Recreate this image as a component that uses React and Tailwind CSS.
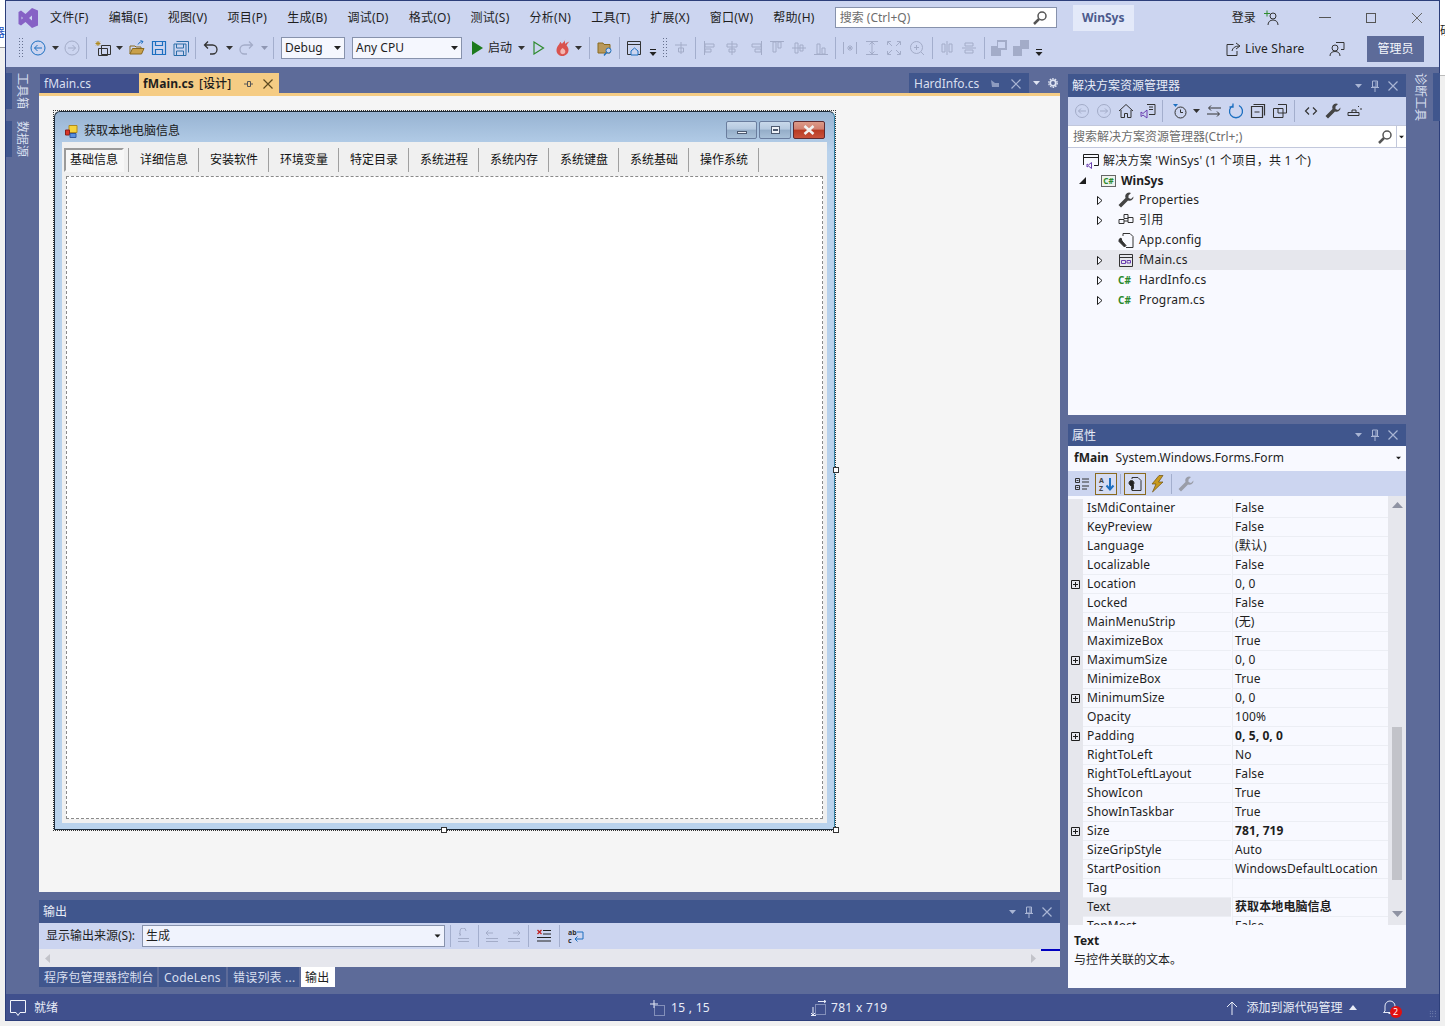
import React from 'react';

const Ico = ({ children, w = 16, h = 16, className = '' }) => (
    <svg width={w} height={h} viewBox={`0 0 ${w} ${h}`} fill="none" stroke="currentColor" strokeWidth="1" className={`shrink-0 ${className}`}>
        {children}
    </svg>
);

const Caret = ({ className = '' }) => (
    <svg width="7" height="4" viewBox="0 0 7 4" className={`shrink-0 ${className}`}><path d="M0 0h7L3.5 4z" fill="currentColor" /></svg>
);
const Sep = ({ className = '' }) => <div className={`w-px h-[22px] bg-[#a3aecd] shrink-0 ${className}`} />;
const Grip = ({ className = '' }) => (
    <div className={`w-[6px] h-[22px] shrink-0 bg-[radial-gradient(#66718f_0.6px,transparent_0.8px)] bg-[length:3px_3px] ${className}`} />
);
const ChevBar = ({ className = '' }) => (
    <svg width="8" height="8" viewBox="0 0 8 8" className={`shrink-0 ${className}`}><path d="M1 1h6v1H1z M0.5 4h7L4 8z" fill="#222" /></svg>
);

const Pin = () => <svg width="10" height="12" viewBox="0 0 10 12" className="shrink-0"><path d="M2.5 1h5v6h-5z M1 7.5h8 M5 8v4 M6 1.5v5" fill="none" stroke="currentColor" /></svg>;
const Cross = () => <svg width="10" height="10" viewBox="0 0 10 10" className="shrink-0"><path d="M0.5 0.5l9 9M9.5 0.5l-9 9" stroke="currentColor" strokeWidth="1.2" /></svg>;

const ToolTitle = ({ label, h = 'h-[23px]' }) => (
    <div className={`${h} pr-[8px] bg-[#40568d] flex items-center pl-[4px] text-[12px] text-[#e8ecf7]`}>
        <span className="pt-px">{label}</span>
        <div className="ml-auto flex items-center gap-[8px] text-[#a9b5d4]">
            <Caret />
            <Pin />
            <Cross />
        </div>
    </div>
);

const menus = ['文件(F)', '编辑(E)', '视图(V)', '项目(P)', '生成(B)', '调试(D)', '格式(O)', '测试(S)', '分析(N)', '工具(T)', '扩展(X)', '窗口(W)', '帮助(H)'];
const formTabs = ['详细信息', '安装软件', '环境变量', '特定目录', '系统进程', '系统内存', '系统键盘', '系统基础', '操作系统'];

const props = [
    ['IsMdiContainer', 'False'], ['KeyPreview', 'False'], ['Language', '(默认)'], ['Localizable', 'False'],
    ['Location', '0, 0', 'plus'], ['Locked', 'False'], ['MainMenuStrip', '(无)'], ['MaximizeBox', 'True'],
    ['MaximumSize', '0, 0', 'plus'], ['MinimizeBox', 'True'], ['MinimumSize', '0, 0', 'plus'], ['Opacity', '100%'],
    ['Padding', '0, 5, 0, 0', 'plus', 'bold'], ['RightToLeft', 'No'], ['RightToLeftLayout', 'False'], ['ShowIcon', 'True'],
    ['ShowInTaskbar', 'True'], ['Size', '781, 719', 'plus', 'bold'], ['SizeGripStyle', 'Auto'],
    ['StartPosition', 'WindowsDefaultLocation'], ['Tag', ''], ['Text', '获取本地电脑信息', '', 'bold', 'sel'], ['TopMost', 'False'],
];

const PlusBox = () => (
    <svg width="9" height="9" viewBox="0 0 9 9" className="shrink-0"><path d="M0.5 0.5h8v8h-8z M2 4.5h5 M4.5 2v5" fill="none" stroke="#1e1e1e" /></svg>
);

const TreeArrow = () => (
    <svg width="6" height="9" viewBox="0 0 6 9" className="shrink-0"><path d="M0.5 0.5L5 4.5L0.5 8.5z" fill="#f8f9ff" stroke="#1e1e1e" /></svg>
);

const CSharp = () => <span className="w-[16px] shrink-0 text-[10px] font-bold text-[#2d8a2d] leading-none">C#</span>;

const TreeRow = ({ arrow, icon, label, sel }) => (
    <div className={`h-[20px] flex items-center pl-[29px] ${sel ? 'bg-[#e6e7ed]' : ''}`}>
        <div className="w-[6px] flex items-center shrink-0">{arrow && <TreeArrow />}</div>
        <div className="w-[16px] ml-[15px] shrink-0 flex items-center justify-center">{icon}</div>
        <span className="ml-[5px] tracking-[0.2px]">{label}</span>
    </div>
);

const Gray = ({ children, className = '' }) => <Ico className={`text-[#a3acc8] ${className}`}>{children}</Ico>;

const Wrench = ({ fill = '#444', className = '' }) => (
    <svg width="16" height="16" viewBox="0 0 16 16" className={`shrink-0 ${className}`}><path d="M11 0.500a4 4 0 0 0-3.500 5.500L0.500 13l2.500 2.500 7-7A4 4 0 0 0 15.500 4.500L13 7l-2.500-1V3.500L13 1a4 4 0 0 0-2-.5z" fill={fill} /></svg>
);

const MainToolbar = () => (
    <div className="h-[33px] pb-[6px] flex items-center text-[#1e1e1e] text-[12px]">
        <Grip className="ml-[12px]" />
        <Ico className="ml-[6px] text-[#1c6fc0]"><circle cx="8" cy="8" r="7" /><path d="M12 8H4.5M7.5 5L4.5 8l3 3" /></Ico>
        <Caret className="ml-[6px] text-[#333]" />
        <Gray className="ml-[5px]"><circle cx="8" cy="8" r="7" /><path d="M4 8h7.5M8.5 5l3 3-3 3" /></Gray>
        <Sep className="ml-[6px]" />
        <Ico className="ml-[8px] text-[#333]"><path d="M6.5 5.5h9v9h-9z M3.5 8.5h9v7h-9z" /><path d="M3 1v5M0.5 3.5h5M1.2 1.7l3.6 3.6M4.8 1.7L1.2 5.3" stroke="#b08a1e" /></Ico>
        <Caret className="ml-[5px] text-[#333]" />
        <Ico className="ml-[6px]"><path d="M1 14V6h5l1 1h5v2" stroke="#8a6a1e" /><path d="M1 14l2.5-5.5H15L12.5 14z" fill="#c9a04a" stroke="#8a6a1e" /><path d="M9 4.5c1-2 3-3 4.5-3M11.5 0.5l2.5 1-1.5 2.2" stroke="#1c6fc0" /></Ico>
        <Ico className="ml-[6px] text-[#1c6fc0]"><path d="M1.5 1.5h13v13h-13z M4.5 1.5v4h7v-4 M4.5 14.5v-5h7v5" strokeWidth="1.2" /></Ico>
        <Ico className="ml-[6px] text-[#2c6ea8]"><path d="M3.5 1.5h12v11 M1 4h12v11.5H1z M3.5 4v4h7V4 M3.5 15v-4h7v4" /></Ico>
        <Sep className="ml-[6px]" />
        <Ico className="ml-[7px] text-[#333]"><path d="M5 1.5L1.5 5 5 8.5M1.5 5h8a4.5 4.5 0 0 1 0 9H7" strokeWidth="1.3" /></Ico>
        <Caret className="ml-[7px] text-[#333]" />
        <Gray className="ml-[5px]"><path d="M11 1.5L14.5 5 11 8.5M14.5 5h-8a4.5 4.5 0 0 0 0 9H9" strokeWidth="1.3" /></Gray>
        <Caret className="ml-[7px] text-[#8f97b3]" />
        <Sep className="ml-[5px]" />
        <div className="ml-[7px] w-[64px] h-[22px] shrink-0 bg-[#f5f7fe] border border-[#8792ac] flex items-center pl-[3px] pr-[3px]">
            <span>Debug</span><Caret className="ml-auto text-[#222]" />
        </div>
        <div className="ml-[7px] w-[110px] h-[22px] shrink-0 bg-[#f5f7fe] border border-[#8792ac] flex items-center pl-[3px] pr-[3px]">
            <span>Any CPU</span><Caret className="ml-auto text-[#222]" />
        </div>
        <svg width="11" height="14" viewBox="0 0 11 14" className="ml-[10px] shrink-0"><path d="M0 0l11 7-11 7z" fill="#1c7a1c" /></svg>
        <span className="ml-[5px] w-[25px] shrink-0">启动</span>
        <Caret className="ml-[5px] text-[#333]" />
        <svg width="12" height="14" viewBox="0 0 12 14" className="ml-[8px] shrink-0"><path d="M1 1l9.5 6L1 13z" fill="none" stroke="#2e8b2e" strokeWidth="1.2" /></svg>
        <svg width="16" height="18" viewBox="0 0 16 18" className="ml-[10px] shrink-0"><path d="M10 0c.5 2.5-2 3-3 5C6 3.5 5.5 3 5 3c.3 2-3.5 4-3.5 8.5C1.500 15 4.500 17 7.500 17s6-2.500 6-6c0-2-1-3.500-2-4.500.5-1.500 2-3 3-4-2 .5-3 1-4.500 2.500z" fill="#d9534f" /><path d="M7.500 9c-2 1.500-2.500 3-2 5 .5 1.500 3.500 1.500 4.500 0 .8-1.500.3-3.500-2.500-5z" fill="#f4b6b0" /></svg>
        <Caret className="ml-[4px] text-[#333]" />
        <Sep className="ml-[7px]" />
        <Ico className="ml-[7px]"><path d="M1 13V3h5l1 1.500h6V13z" fill="#b9985a" stroke="#8a6a1e" /><circle cx="11.500" cy="10.500" r="2.500" fill="#ccd5f0" stroke="#1c6fc0" /><path d="M9.500 12.500L7 15.500" stroke="#1c6fc0" strokeWidth="1.300" /></Ico>
        <Sep className="ml-[6px]" />
        <Ico className="ml-[6px] text-[#333]"><path d="M1.500 1.500h13v13h-13z M1.500 4.500h13" /><path d="M5 11l3.500-3 3.500 3v4H5z" fill="#ccd5f0" stroke="#1c6fc0" /></Ico>
        <ChevBar className="ml-[7px] mt-[8px]" />
        <Grip className="ml-[5px]" />
        <Gray className="ml-[5px]"><path d="M8 2v12M2 5h12M5.500 8h5v4h-5z" /></Gray>
        <Sep className="ml-[6px]" />
        <Gray className="ml-[7px]"><path d="M1.500 1v14M2 4h9v3H2zM2 9h6v3H2z" /></Gray>
        <Gray className="ml-[5px]"><path d="M8 1v14M3 4h10v3H3zM5 9h6v3H5z" /></Gray>
        <Gray className="ml-[7px]"><path d="M14.500 1v14M5 4h9v3H5zM8 9h6v3H8z" /></Gray>
        <Gray className="ml-[6px]"><path d="M1 1.500h14M4 2v10h3V2zM9 2v6h3V2z" /></Gray>
        <Gray className="ml-[6px]"><path d="M1 8h14M4 3v10h3V3zM9 5v6h3V5z" /></Gray>
        <Gray className="ml-[6px]"><path d="M1 14.500h14M4 4v10h3V4zM9 8v6h3V8z" /></Gray>
        <Sep className="ml-[6px]" />
        <Gray className="ml-[6px]"><path d="M1.500 2v12M14.500 2v12M5 8h6M8 5v6M6 6l4 4M10 6l-4 4" /></Gray>
        <Gray className="ml-[6px]"><path d="M2 1.500h12M2 14.500h12M8 2v12M5.500 4.500L8 2l2.500 2.500M5.500 11.500L8 14l2.500-2.500" /></Gray>
        <Gray className="ml-[6px]"><path d="M1.500 5V1.500H5M11 1.500h3.500V5M14.500 11v3.500H11M5 14.500H1.500V11M2 2l4 4M14 2l-4 4M14 14l-4-4M2 14l4-4" /></Gray>
        <Gray className="ml-[7px]"><circle cx="7.500" cy="7.500" r="6" /><path d="M12 12l3 3M5 7.500h5M7.500 5v5" /></Gray>
        <Sep className="ml-[7px]" />
        <Gray className="ml-[6px]"><path d="M8 1v14M3 4h3v8H3zM10 4h3v8h-3z" /></Gray>
        <Gray className="ml-[6px]"><path d="M1 8h14M4 3h8v3H4zM4 10h8v3H4z" /></Gray>
        <Sep className="ml-[7px]" />
        <svg width="16" height="16" viewBox="0 0 16 16" className="ml-[6px] shrink-0"><path d="M0 6h10v10H0z" fill="#a3acc8" /><path d="M6 0h10v10H6z" fill="#a3acc8" /><path d="M7 2h7v6H7z" fill="#ccd5f0" /></svg>
        <svg width="16" height="16" viewBox="0 0 16 16" className="ml-[6px] shrink-0"><path d="M0 6h9v10H0z" fill="#a3acc8" /><path d="M7 0h9v9H7z" fill="#a3acc8" /></svg>
        <ChevBar className="ml-[6px] mt-[8px]" />
        <div className="ml-auto flex items-center pr-[15px] mt-[2px]">
            <Ico className="text-[#333]"><path d="M8.500 3.500H2v11h10V10M7 10c.5-3 3-5 7-5M11 2l4 3-4 3" /></Ico>
            <span className="ml-[4px] w-[60px] tracking-[0.2px]">Live Share</span>
            <Ico className="ml-[24px] text-[#333]"><circle cx="6" cy="7" r="3" /><path d="M1 15c0-3 2-4.500 5-4.500s5 1.500 5 4.500M7 1.500h8v7h-3" /></Ico>
            <div className="ml-[22px] w-[57px] h-[26px] bg-[#5d6b99] text-[#f4f6fc] flex items-center justify-center">管理员</div>
        </div>
    </div>
);

const SolutionExplorer = () => (
    <div className="h-[341px] flex flex-col shrink-0">
        <ToolTitle label="解决方案资源管理器" />
        <div className="h-[28px] bg-[#ccd5f0] flex items-center text-[#333] shrink-0">
            <Gray className="ml-[6px]"><circle cx="8" cy="8" r="6.500" /><path d="M12 8H4.500M7 5.500L4.500 8 7 10.500" /></Gray>
            <Gray className="ml-[6px]"><circle cx="8" cy="8" r="6.500" /><path d="M4 8h7.500M9 5.500L11.500 8 9 10.500" /></Gray>
            <Ico className="ml-[6px]"><path d="M1 8l7-6.500L15 8M3 7v7.500h3.500v-4h3v4H13V7" /></Ico>
            <Ico className="ml-[6px]"><path d="M7 1.500h8v10H9M9 4h4M9 6.500h4" /><path d="M1 9l2 1.500 4-3.500v8L3 12l-2 1.500z" stroke="#6a3fb0" /></Ico>
            <Sep className="ml-[6px]" />
            <Ico className="ml-[9px]"><circle cx="8.500" cy="9.500" r="5.500" /><path d="M8.500 6.500v3h2.500" /><path d="M1 1h5L3.500 4z" fill="#1c6fc0" stroke="none" /></Ico>
            <Caret className="ml-[5px]" />
            <Ico className="ml-[6px]"><path d="M15 5H3M5 2.500L2.500 5 5 7.500M1 11h12M11 8.500l2.500 2.500L11 13.500" /></Ico>
            <Ico className="ml-[6px] text-[#1c6fc0]"><path d="M5 2.500A6.500 6.500 0 1 0 11 2.500M5 0.500v3.500H1.500" strokeWidth="1.300" /></Ico>
            <Ico className="ml-[6px]"><path d="M3.500 1.500h11v11M1.500 3.500h11v11h-11zM4.500 9h5" strokeWidth="1.200" /></Ico>
            <Ico className="ml-[6px]"><path d="M6 1.500h8.500V10H11M1.500 5.500H11V14.500H1.500zM6 5.500V10h5" /></Ico>
            <Sep className="ml-[6px]" />
            <Ico className="ml-[8px]"><path d="M6 4.500L2.500 8 6 11.500M10 4.500L13.500 8 10 11.500" strokeWidth="1.200" /></Ico>
            <Wrench className="ml-[6px]" />
            <Ico className="ml-[6px]"><path d="M1 9.500h11v3H1zM5 9.500V7h4v2.500M11 4l1-1M13 6h2" /></Ico>
        </div>
        <div className="h-[23px] bg-white border-y border-[#c2c8dc] flex items-center pl-[5px] text-[12px] text-[#6d6d6d] shrink-0">
            <span>搜索解决方案资源管理器(Ctrl+;)</span>
            <Ico className="ml-auto text-[#555]"><circle cx="10" cy="6" r="4" strokeWidth="1.500" /><path d="M7 9l-5 5" strokeWidth="2.500" /></Ico>
            <div className="ml-[3px] w-[10px] h-full border-l border-[#c2c8dc] flex items-center justify-center"><Caret className="text-[#222] scale-75" /></div>
        </div>
        <div className="flex-1 bg-[#f8f9ff] pt-[2px] text-[12px] text-[#1e1e1e]">
            <div className="h-[20px] flex items-center pl-[15px] pt-px">
                <Ico><path d="M0.500 1.500h15v11H11M0.500 12V1.500M0.500 4.500h15" /><path d="M4 11l1.500 1 3-2.500v6l-3-2.500-1.500 1z" stroke="#6a3fb0" /></Ico>
                <span className="ml-[4px] tracking-[0.22px]">解决方案 'WinSys' (1 个项目，共 1 个)</span>
            </div>
            <div className="h-[20px] flex items-center pl-[11px] pt-px">
                <svg width="7" height="7" viewBox="0 0 7 7" className="shrink-0"><path d="M7 0v7H0z" fill="#1e1e1e" /></svg>
                <div className="ml-[15px] w-[15px] h-[12px] border border-[#666] bg-[#eef3ee] text-[8px] leading-[10px] text-center font-bold text-[#2d8a2d] shrink-0">C#</div>
                <span className="ml-[5px] font-bold">WinSys</span>
            </div>
            <TreeRow arrow label="Properties" icon={<Wrench />} />
            <TreeRow arrow label="引用" icon={<Ico className="text-[#333]"><path d="M6 2.500h4v4H6zM1 7.500h5v4H1zM10 5.500h5v5h-5zM6 9h4" /></Ico>} />
            <TreeRow label="App.config" icon={<Ico className="text-[#333]"><path d="M5 4V1.500h7l3 3v11H8" /><path d="M3 6a3 3 0 0 0-2 3.500L6.500 15 8 13.500 4 9z" fill="#333" /></Ico>} />
            <TreeRow arrow sel label="fMain.cs" icon={<Ico className="text-[#333]"><path d="M1.500 2.500h13v12h-13zM1.500 5.500h13" /><path d="M3.500 8.500h4v3h-4zM9 8.500h3.500v2.500H9z" stroke="#6a3fb0" /></Ico>} />
            <TreeRow arrow label="HardInfo.cs" icon={<CSharp />} />
            <TreeRow arrow label="Program.cs" icon={<CSharp />} />
        </div>
    </div>
);

const PropertiesPanel = () => (
    <div className="mt-[9px] h-[564px] flex flex-col shrink-0">
        <ToolTitle label="属性" h="h-[22px]" />
        <div className="h-[25px] bg-[#f8f9ff] flex items-center pl-[6px] pr-[4px] pb-[2px] text-[12px] text-[#1e1e1e] shrink-0">
            <span className="font-bold">fMain</span>
            <span className="ml-[7px] tracking-[0.1px]">System.Windows.Forms.Form</span>
            <Caret className="ml-auto scale-75" />
        </div>
        <div className="h-[25px] bg-[#ccd5f0] flex items-center text-[#333] shrink-0">
            <Ico className="ml-[6px]"><path d="M1.500 2.500h4v4h-4zM1.500 9.500h4v4h-4zM8 3h7M8 6h7M8 10h7M8 13h5M2.500 4.500h2M2.500 11.500h2" /></Ico>
            <div className="ml-[5px] w-[22px] h-[22px] border border-[#8a6a1e] bg-[#d5dcf2] flex items-center justify-center">
                <svg width="17" height="16" viewBox="0 0 17 16"><text x="1" y="7" fontSize="7" fontWeight="bold" fill="#444" fontFamily="Noto Sans">A</text><text x="1" y="15" fontSize="7" fontWeight="bold" fill="#444" fontFamily="Noto Sans">Z</text><path d="M12 2v11M8.500 9.500L12 13.500l3.500-4" stroke="#1c6fc0" strokeWidth="2" fill="none" /></svg>
            </div>
            <div className="ml-[3px] w-px h-[20px] bg-[#a3aecd]" />
            <div className="ml-[3px] w-[22px] h-[22px] border border-[#8a6a1e] bg-[#d5dcf2] flex items-center justify-center">
                <Ico><path d="M5 3V1.500h6l3 3v10H5v-3" /><path d="M4.500 4.500a2.500 2.500 0 0 0-2 4l2 2v3l2-1v-4a2.500 2.500 0 0 0-2-4z" fill="#222" /></Ico>
            </div>
            <svg width="16" height="18" viewBox="0 0 16 18" className="ml-[3px]"><path d="M10 0.500L3 9h4l-3.500 8L14 7H9.500L14 0.500z" fill="#c89a1e" stroke="#6e5210" strokeWidth="0.700" /></svg>
            <div className="ml-[6px] w-px h-[20px] bg-[#a3aecd]" />
            <Wrench fill="#9a9da8" className="ml-[6px]" />
        </div>
        <div className="h-[429px] bg-[#f8f9ff] flex overflow-hidden shrink-0 text-[12px] text-[#1e1e1e]">
            <div className="flex-1 pt-[3px] min-w-0">
                {props.map(([name, value, plus, bold, sel]) => (
                    <div key={name} className="h-[19px] flex items-stretch shrink-0">
                        <div className="w-[15px] bg-[#e6e7ed] flex items-center justify-center shrink-0 pr-[1px]">{plus && <PlusBox />}</div>
                        <div className={`w-[148px] pl-[4px] flex items-center border-b border-[#eceef4] shrink-0 tracking-[0.12px] ${sel ? 'bg-[#e6e7ed]' : ''}`}>{name}</div>
                        <div className={`flex-1 pl-[2px] ml-px flex items-center border-b border-[#eceef4] border-l border-l-[#eceef4] tracking-[0.1px] ${bold ? 'font-bold' : ''}`}>{value}</div>
                    </div>
                ))}
            </div>
            <div className="w-[18px] bg-[#e6e7ed] flex flex-col items-center shrink-0">
                <svg width="11" height="6" viewBox="0 0 11 6" className="mt-[6px] shrink-0"><path d="M5.500 0L11 6H0z" fill="#8f93a3" /></svg>
                <div className="mt-[219px] w-[10px] h-[153px] bg-[#c2c3c9]" />
                <svg width="11" height="6" viewBox="0 0 11 6" className="mt-[31px] shrink-0"><path d="M0 0h11L5.500 6z" fill="#8f93a3" /></svg>
            </div>
        </div>
        <div className="h-[63px] bg-[#f8f9ff] pl-[6px] pt-[6px] text-[12px] text-[#1e1e1e] shrink-0 leading-[19px]">
            <div className="font-bold">Text</div>
            <div>与控件关联的文本。</div>
        </div>
    </div>
);

const WinBtn = ({ w, red, children }) => (
    <div className={`${w} h-[18px] rounded-[2px] border flex items-center justify-center shrink-0 ${red ? 'border-[#5e2a30] bg-[linear-gradient(#dd9a88_0%,#d08070_45%,#b83a22_50%,#c9523c_100%)]' : 'border-[#6a7d9e] bg-[linear-gradient(#c8d8ea_0%,#b5c9e0_45%,#94adc8_50%,#a8c0d8_100%)]'}`}>
        {children}
    </div>
);

const DesignerForm = () => (
    <div className="relative w-[783px] h-[721px] mt-[14px] ml-[14px] border border-dotted border-[#333]">
        <div className="w-full h-full rounded-t-[6px] border border-[#1d2b3a] border-r-[#2d7fa3] bg-[linear-gradient(#97b3d2,#b9d2ec_40px,#b9d2ec)] flex flex-col px-[7px] pb-[6px]">
            <div className="h-[30px] pt-[8px] flex items-center shrink-0">
                <svg width="13" height="13" viewBox="0 0 13 13" className="ml-[3px] shrink-0"><path d="M4 0.500h8v7H4z" fill="#f5d33c" stroke="#b08a1e" /><path d="M0.500 5h4v5h-4z" fill="#d9352a" stroke="#8a2018" /><path d="M5 8.500h6v4H5z" fill="#5a8fe0" stroke="#305a9e" /></svg>
                <span className="ml-[6px] text-[12px] text-[#1a1a1a]">获取本地电脑信息</span>
                <div className="ml-auto mr-[2px] -mt-[3px] flex items-center gap-[2px]">
                    <WinBtn w="w-[31px]"><div className="w-[10px] h-[3px] mt-[5px] bg-[#eef2f8] border border-[#4d5a70]" /></WinBtn>
                    <WinBtn w="w-[32px]"><div className="w-[9px] h-[8px] bg-[#eef2f8] border border-[#4d5a70] flex items-center justify-center"><div className="w-[5px] h-[2px] bg-[#4d5a70]" /></div></WinBtn>
                    <WinBtn w="w-[32px]" red><svg width="12" height="10" viewBox="0 0 12 10"><path d="M1.500 1l9 8M10.500 1l-9 8" stroke="#f2f2f2" strokeWidth="2.600" /></svg></WinBtn>
                </div>
            </div>
            <div className="flex-1 bg-[#f0f0f0] flex flex-col px-[4px] pt-[6px] pb-[4px] text-[12px] text-[#111] min-h-0">
                <div className="h-[24px] flex items-stretch shrink-0 -ml-[2px]">
                    <div className="w-[65px] border-r border-[#a0a0a0] shrink-0 pr-[4px]">
                        <div className="h-full border-2 border-[#9a9a9a] border-r-[#f7f7f7] border-b-[#f7f7f7] bg-[#f7f7f7] flex items-center justify-center">基础信息</div>
                    </div>
                    {formTabs.map((t) => (
                        <div key={t} className="w-[70px] border-r border-[#a0a0a0] flex items-center pl-[11px] shrink-0">{t}</div>
                    ))}
                </div>
                <div className="mt-[4px] flex-1 border border-dashed border-[#8a8a8a] bg-white" />
            </div>
        </div>
        <div className="absolute left-[387px] -bottom-[3px] w-[6px] h-[6px] bg-white border border-[#333]" />
        <div className="absolute -right-[4px] top-[356px] w-[6px] h-[6px] bg-white border border-[#333]" />
        <div className="absolute -right-[4px] -bottom-[3px] w-[6px] h-[6px] bg-white border border-[#333]" />
    </div>
);

const OutputPanel = () => (
    <div className="mt-[8px] shrink-0">
        <ToolTitle label="输出" />
        <div className="h-[26px] bg-[#ccd5f0] flex items-center pl-[7px] text-[12px] text-[#1e1e1e] relative">
            <span className="w-[90px] shrink-0">显示输出来源(S):</span>
            <div className="ml-[6px] w-[303px] h-[22px] bg-[#f0f3fd] border border-[#8792ac] flex items-center px-[3px] shrink-0">
                <span>生成</span><Caret className="ml-auto scale-90" />
            </div>
            <Sep className="ml-[5px]" />
            <Gray className="ml-[5px]"><path d="M4 8V3a3 3 0 0 1 6 0M2 10.500h11M2 13.500h11M5 7L3 5" /></Gray>
            <Sep className="ml-[6px]" />
            <Gray className="ml-[5px]"><path d="M2 5h7M4.500 2.500L2 5l2.500 2.500M2 10.500h12M2 13.500h12" /></Gray>
            <Gray className="ml-[6px]"><path d="M14 5H7M11.500 2.500L14 5l-2.500 2.500M2 10.500h12M2 13.500h12" /></Gray>
            <Sep className="ml-[6px]" />
            <Ico className="ml-[7px] text-[#222]"><path d="M7 2.500h8M7 6h8M1 9.500h14M1 13h14" /><path d="M1.500 2l4 4M5.500 2l-4 4" stroke="#c02020" strokeWidth="1.300" /></Ico>
            <Sep className="ml-[7px]" />
            <svg width="16" height="16" viewBox="0 0 16 16" className="ml-[8px] shrink-0"><text x="0" y="7" fontSize="7" fontWeight="bold" fill="#333" fontFamily="Noto Sans">ab</text><text x="0" y="15" fontSize="7" fontWeight="bold" fill="#333" fontFamily="Noto Sans">c</text><path d="M9 4h6v7H7M9.500 8.500L7 11l2.500 2.500" fill="none" stroke="#1c6fc0" /></svg>
            <div className="absolute right-0 bottom-[-2px] w-[19px] h-[2px] bg-[#0000c0]" />
        </div>
        <div className="h-[18px] bg-[#e6e7ed] flex items-center justify-between pl-[6px] pr-[24px]">
            <svg width="5" height="9" viewBox="0 0 5 9"><path d="M5 0v9L0 4.500z" fill="#c2c3c9" /></svg>
            <svg width="5" height="9" viewBox="0 0 5 9"><path d="M0 0v9l5-4.500z" fill="#c2c3c9" /></svg>
        </div>
        <div className="h-[20px] flex text-[12px] tracking-[0.2px]">
            <div className="w-[118px] bg-[#40568d] text-[#d8dfef] flex items-center pl-[5px] pt-px">程序包管理器控制台</div>
            <div className="ml-[2px] w-[67px] bg-[#40568d] text-[#d8dfef] flex items-center pl-[5px] pt-px">CodeLens</div>
            <div className="ml-[2px] w-[71px] bg-[#40568d] text-[#d8dfef] flex items-center pl-[5px] pt-px">错误列表 ...</div>
            <div className="ml-[2px] w-[34px] bg-white text-[#1e1e1e] flex items-center pl-[4px] pt-px">输出</div>
        </div>
    </div>
);

const VerticalLabel = ({ children, className = '' }) => (
    <div className={`[writing-mode:vertical-rl] [text-orientation:sideways] text-[12px] text-[#d8dfef] leading-[13px] ${className}`}>{children}</div>
);

const App = () => {
    return (
        <div className="w-[1445px] h-[1026px] bg-[#f0f0f0] flex overflow-hidden font-['Noto_Sans','Noto_Sans_CJK_SC',sans-serif]">
            <div className="w-[5px] h-[1026px] shrink-0 overflow-hidden">
                <div className="h-[48px] bg-white pt-[24px] text-[12px] text-[#1c4fc0] whitespace-nowrap -ml-[7px] border-b border-[#999]">器</div>
            </div>
            <div className="w-[1435px] h-[1021px] shrink-0 border-l border-r border-b border-t border-[#2c3e7a] flex flex-col bg-[#5d6b99]">
                <div className="bg-[#ccd5f0] shrink-0">
                    <div className="h-[33px] flex items-center text-[12px] text-[#1e1e1e]">
                        <svg width="20" height="20" viewBox="0 0 20 20" className="ml-[12px] shrink-0"><path fillRule="evenodd" d="M14 0L20 2.500v15L14 20 7.500 14 3 17.500 0.500 16V4L3 2.500 7.500 6zM14 7.500L11 10l3 2.500zM3.500 8.500v3L5 10z" fill="#8661c5" /></svg>
                        <div className="ml-[12px] flex items-center gap-[20px] tracking-[0.25px]">
                            {menus.map((m) => <span key={m} className="whitespace-nowrap">{m}</span>)}
                        </div>
                        <div className="ml-[20px] w-[222px] h-[21px] bg-white border border-[#8792ac] flex items-center pl-[4px] pr-[8px] text-[#6d6d6d] shrink-0">
                            <span>搜索 (Ctrl+Q)</span>
                            <Ico className="ml-auto text-[#555]"><circle cx="10" cy="6" r="4" strokeWidth="1.500" /><path d="M7 9l-5 5" strokeWidth="2.500" /></Ico>
                        </div>
                        <div className="ml-[16px] w-[61px] h-[26px] bg-[#e3e9f9] flex items-center justify-center font-bold text-[#4c5a8c] shrink-0">WinSys</div>
                        <span className="ml-[98px]">登录</span>
                        <Ico className="ml-[8px] text-[#333]"><circle cx="9" cy="6" r="3" /><path d="M4 15c0-3 2-5 5-5s5 2 5 5" /><path d="M3 0.500v6M0 3.500h6" stroke="#2e8b2e" /></Ico>
                        <div className="ml-[39px] w-[12px] h-px bg-[#555] shrink-0" />
                        <div className="ml-[35px] w-[10px] h-[10px] border border-[#555] shrink-0" />
                        <svg width="12" height="12" viewBox="0 0 12 12" className="ml-[35px] shrink-0 text-[#666]"><path d="M1 1l10 10M11 1L1 11" stroke="currentColor" /></svg>
                    </div>
                    <MainToolbar />
                </div>
                <div className="h-[927px] flex shrink-0">
                    <div className="w-[33px] pt-[6px] shrink-0 flex flex-col gap-[12px]">
                        <div className="h-[36px] flex"><div className="w-[6px] bg-[#40568d]" /><VerticalLabel className="ml-[4px]">工具箱</VerticalLabel></div>
                        <div className="h-[36px] flex"><div className="w-[6px] bg-[#40568d]" /><VerticalLabel className="ml-[4px]">数据源</VerticalLabel></div>
                    </div>
                    <div className="w-[1021px] pt-[6px] flex flex-col shrink-0">
                        <div className="h-[20px] flex text-[12px] shrink-0">
                            <div className="ml-px mt-px w-[99px] bg-[#40508d] text-[#d8dfef] flex items-center pl-[4px]">fMain.cs</div>
                            <div className="w-[140px] bg-[#f5cc84] text-[#1e1e1e] flex items-center pl-[4px] pt-[2px]">
                                <span className="font-bold tracking-[0.1px]">fMain.cs</span>
                                <span className="ml-[5px] font-medium tracking-[0.1px]">[设计]</span>
                                <svg width="10" height="8" viewBox="0 0 10 8" className="ml-[13px] shrink-0"><path d="M0 4h3M3.500 1.500h3v5h-3zM6.500 4H9" fill="none" stroke="#555" /></svg>
                                <svg width="10" height="10" viewBox="0 0 10 10" className="ml-[9px] shrink-0"><path d="M0.500 0.500l9 9M9.500 0.500l-9 9" stroke="#5e4a20" strokeWidth="1.200" /></svg>
                            </div>
                            <div className="ml-auto w-[120px] bg-[#40568d] text-[#d8dfef] flex items-center pl-[5px] pt-px">
                                <span>HardInfo.cs</span>
                                <svg width="10" height="9" viewBox="0 0 10 9" className="ml-[11px] shrink-0"><path d="M1 1l4 3h4v4H2z" fill="#8d9bc0" /></svg>
                                <span className="ml-[11px] text-[#a9b5d4]"><Cross /></span>
                            </div>
                            <div className="w-[31px] flex items-center text-[#dfe4f2]">
                                <Caret className="ml-[4px]" />
                                <svg width="10" height="10" viewBox="0 0 10 10" className="ml-[8px] shrink-0"><circle cx="5" cy="5" r="2.800" fill="none" stroke="currentColor" strokeWidth="1.800" /><circle cx="5" cy="5" r="4.300" fill="none" stroke="currentColor" strokeWidth="1.200" strokeDasharray="1.600 1.100" /></svg>
                            </div>
                        </div>
                        <div className="h-[3px] bg-[#f5cc84] shrink-0" />
                        <div className="h-[796px] bg-[#f5f5f5] shrink-0 overflow-visible">
                            <DesignerForm />
                        </div>
                        <OutputPanel />
                    </div>
                    <div className="w-[8px] shrink-0" />
                    <div className="w-[338px] pt-[7px] flex flex-col shrink-0">
                        <SolutionExplorer />
                        <PropertiesPanel />
                    </div>
                    <div className="flex-1 pt-[6px] flex pl-[8px]">
                        <VerticalLabel className="h-[48px]">诊断工具</VerticalLabel>
                        <div className="ml-[6px] w-[7px] h-[48px] bg-[#40568d]" />
                    </div>
                </div>
                <div className="flex-1 bg-[#40508d] flex items-center pt-px text-[12px] text-[#e8ecf7]">
                    <svg width="18" height="18" viewBox="0 0 18 18" className="ml-[3px] shrink-0"><path d="M1.500 1.500h15v12H11l-2 3-2-3H1.500z" fill="none" stroke="#f2f4fb" /></svg>
                    <span className="ml-[7px]">就绪</span>
                    <svg width="16" height="16" viewBox="0 0 16 16" className="ml-[592px] shrink-0"><path d="M4 0v8M0 4h8" stroke="#e8ecf7" /><path d="M4.500 5.500h10v10h-10z" fill="none" stroke="#c8d0e6" strokeDasharray="1 1" /></svg>
                    <span className="ml-[5px] tracking-[0.3px]">15 , 15</span>
                    <svg width="16" height="16" viewBox="0 0 16 16" className="ml-[101px] shrink-0"><path d="M4.500 4.500h10v10h-10z" fill="none" stroke="#c8d0e6" strokeDasharray="1 1" /><path d="M7 1.500h8M13 0l2 1.500-2 1.500M2 7v8M0 13l2 2 2-2M0 15.500h5" stroke="#e8ecf7" fill="none" /></svg>
                    <span className="ml-[4px] tracking-[0.3px]">781 x 719</span>
                    <svg width="12" height="14" viewBox="0 0 12 14" className="ml-[338px] shrink-0"><path d="M6 14V1M1 6l5-5 5 5" fill="none" stroke="#e8ecf7" /></svg>
                    <span className="ml-[9px]">添加到源代码管理</span>
                    <svg width="8" height="5" viewBox="0 0 8 5" className="ml-[6px] shrink-0"><path d="M0 5L4 0l4 5z" fill="#e8ecf7" /></svg>
                    <div className="relative ml-[26px] shrink-0 w-[14px] h-[16px]">
                        <svg width="14" height="15" viewBox="0 0 14 15"><path d="M2 11V6a5 5 0 0 1 10 0v5l1.500 1.500h-13zM5.500 13.500h3" fill="none" stroke="#e8ecf7" /></svg>
                        <div className="absolute left-[7px] top-[6px] w-[12px] h-[12px] rounded-full bg-[#e01010] text-white text-[9px] leading-[12px] text-center">2</div>
                    </div>
                    <div className="ml-auto mr-[2px] self-end mb-[2px] w-[8px] h-[8px] bg-[radial-gradient(#8d9bc0_0.7px,transparent_0.8px)] bg-[length:2.500px_2.500px]" />
                </div>
            </div>
            <div className="w-[5px] h-[1026px] shrink-0 overflow-hidden">
                <div className="h-[76px] bg-white pt-[22px] text-[12px] text-[#1e1e1e] whitespace-nowrap border-b border-[#bbb]">硬</div>
            </div>
        </div>
    );
};

export default App;
